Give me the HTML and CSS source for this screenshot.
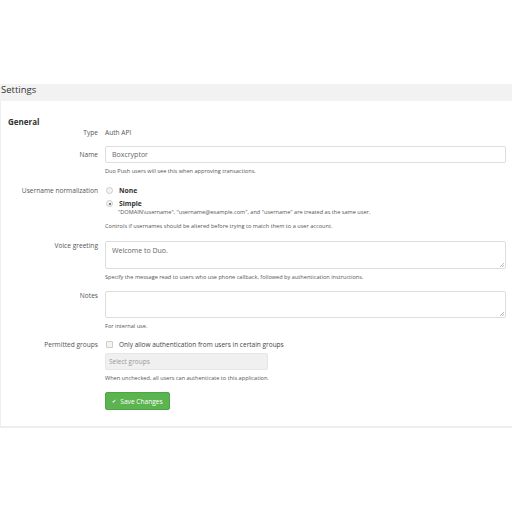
FILE: index.html
```html
<!DOCTYPE html>
<html>
<head>
<meta charset="utf-8">
<link rel="stylesheet" href="styles.css">
</head>
<body>
<div class="page">
  <div class="header">Settings</div>
  <div class="panel">
    <div class="section-title">General</div>
    <div class="row row-type">
      <div class="label">Type</div>
      <div class="control"><div class="static">Auth API</div></div>
    </div>
    <div class="row row-wide">
      <div class="label label-input">Name</div>
      <div class="control">
        <div class="input">Boxcryptor</div>
        <div class="help">Duo Push users will see this when approving transactions.</div>
      </div>
    </div>
    <div class="row row-wide">
      <div class="label">Username normalization</div>
      <div class="control">
        <div class="radio-line"><span class="radio"></span><span class="opt">None</span></div>
        <div class="radio-line radio-line2"><span class="radio checked"></span><span class="opt">Simple</span></div>
        <div class="opt-desc">"DOMAIN\username", "username@example.com", and "username" are treated as the same user.</div>
        <div class="help help-gap">Controls if usernames should be altered before trying to match them to a user account.</div>
      </div>
    </div>
    <div class="row">
      <div class="label">Voice greeting</div>
      <div class="control">
        <div class="textarea">Welcome to Duo.<span class="grip"></span></div>
        <div class="help">Specify the message read to users who use phone callback, followed by authentication instructions.</div>
      </div>
    </div>
    <div class="row">
      <div class="label">Notes</div>
      <div class="control">
        <div class="textarea textarea-short"><span class="grip"></span></div>
        <div class="help">For internal use.</div>
      </div>
    </div>
    <div class="row">
      <div class="label">Permitted groups</div>
      <div class="control">
        <div class="check-line"><span class="checkbox"></span><span class="check-text">Only allow authentication from users in certain groups</span></div>
        <div class="select">Select groups</div>
        <div class="help">When unchecked, all users can authenticate to this application.</div>
      </div>
    </div>
    <div class="row row-actions">
      <div class="label"></div>
      <div class="control">
        <button class="btn"><span class="tick">&#10004;</span>Save Changes</button>
      </div>
    </div>
  </div>
</div>
</body>
</html>
```

FILE: styles.css
```css
html, body {
  margin: 0;
  padding: 0;
  background: #fff;
}
body {
  font-family: "Open Sans", "Noto Sans", sans-serif;
  color: #333;
}
.page {
  padding-top: 84px;
}
.header {
  background: #f2f2f2;
  height: 17px;
  line-height: 11px;
  font-size: 9.5px;
  color: #333;
  padding-left: 1px;
}
.panel {
  border-left: 1px solid #eee;
  border-bottom: 2px solid #eee;
  padding: 16px 0 16px 7px;
}
.section-title {
  font-weight: 700;
  font-size: 8px;
  line-height: 10px;
  margin-bottom: 1px;
}
.row {
  display: flex;
  margin-bottom: 10px;
}
.row-type { margin-bottom: 9px; }
.row-wide { margin-bottom: 11px; }
.label {
  width: 90px;
  flex: none;
  text-align: right;
  font-size: 6.6px;
  color: #555;
  line-height: 9px;
  padding-right: 7px;
}
.label-input { padding-top: 4px; }
.control {
  flex: 1;
  padding-right: 6px;
}
.static {
  font-size: 6.6px;
  line-height: 9px;
  color: #555;
}
.input, .textarea {
  border: 1px solid #ddd;
  border-radius: 2px;
  height: 15px;
  font-size: 7px;
  line-height: 15px;
  padding-left: 6px;
  color: #666;
  position: relative;
}
.textarea {
  line-height: 8px;
  padding-top: 5px;
  box-sizing: border-box;
  height: 28px;
}
.textarea-short { height: 27px; }
.grip {
  position: absolute;
  right: 1px;
  bottom: 1px;
  width: 4px;
  height: 4px;
  background: linear-gradient(135deg, transparent 45%, #bbb 50%, transparent 60%, transparent 70%, #bbb 75%, transparent 85%);
}
.help {
  font-size: 5.6px;
  color: #555;
  margin-top: 4px;
  line-height: 8px;
}
.help-gap { margin-top: 6px; }
.radio-line {
  display: flex;
  align-items: center;
  height: 9px;
}
.radio-line2 { margin-top: 4px; }
.radio {
  width: 5px;
  height: 5px;
  border-radius: 50%;
  border: 1px solid #ccc;
  background: #f4f4f4;
  margin: 0 6px 0 1px;
  box-sizing: content-box;
  position: relative;
}
.radio.checked::after {
  content: "";
  position: absolute;
  left: 1.5px;
  top: 1.5px;
  width: 2px;
  height: 2px;
  border-radius: 50%;
  background: #555;
}
.opt {
  font-weight: 700;
  font-size: 6.8px;
  color: #333;
}
.opt-desc {
  font-size: 5.6px;
  color: #555;
  padding-left: 13px;
  line-height: 8px;
}
.check-line {
  display: flex;
  align-items: center;
  height: 9px;
}
.checkbox {
  width: 5px;
  height: 5px;
  border: 1px solid #ccc;
  border-radius: 1px;
  background: #f4f4f4;
  margin: 0 6px 0 1px;
}
.check-text {
  font-size: 6.5px;
  color: #444;
}
.select {
  margin-top: 4px;
  width: 158px;
  height: 15px;
  background: #f0f0f0;
  border: 1px solid #e6e6e6;
  border-radius: 2px;
  font-size: 6.5px;
  line-height: 15px;
  padding-left: 3px;
  color: #999;
}
.row-actions { margin-bottom: 0; margin-top: 3px; }
.btn {
  background: #5bb450;
  border: 1px solid #4fa545;
  border-radius: 2px;
  color: #fff;
  font-family: "Open Sans", "Noto Sans", sans-serif;
  font-size: 6.6px;
  height: 18px;
  width: 65px;
  padding: 0;
  display: flex;
  align-items: center;
  justify-content: center;
}
.tick {
  font-size: 5px;
  margin-right: 4px;
}
```
